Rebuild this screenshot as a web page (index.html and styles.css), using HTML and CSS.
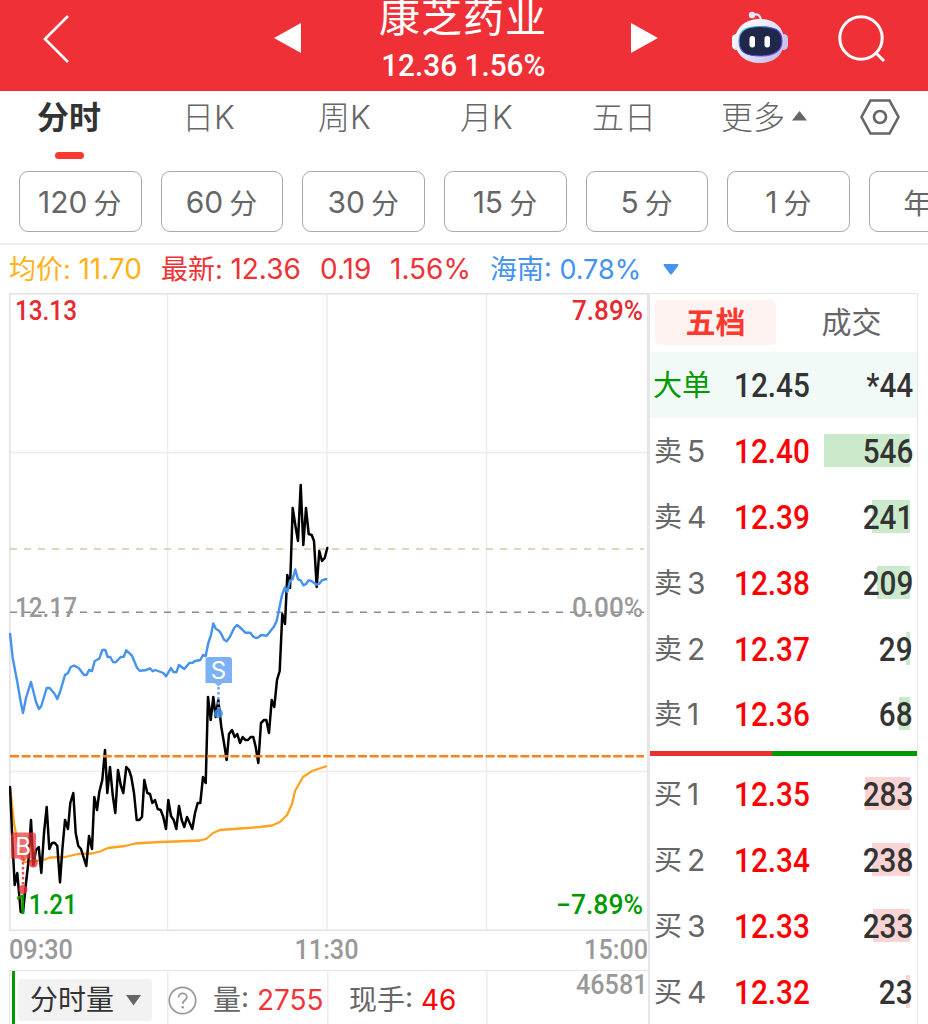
FILE: index.html
```
<!DOCTYPE html>
<html lang="zh-CN">
<head>
  <meta charset="UTF-8" />
  <meta name="viewport" content="width=device-width, initial-scale=1" />
  <title>康芝药业 - 分时</title>
  <link rel="stylesheet" href="styles.css">
</head>
<body>

  <header class="topbar">
    <svg class="back" width="30" height="50" viewBox="0 0 30 50"><path d="M27 2 4 25 27 48" fill="none" stroke="#fff" stroke-width="2.6"/></svg>
    <svg class="prev" width="27" height="30" viewBox="0 0 27 30"><path d="M0 15 27 0V30Z" fill="#fff"/></svg>
    <div class="stock">
      <h1>康芝药业</h1>
      <p><span class="din">12.36 1.56%</span></p>
    </div>
    <svg class="next" width="27" height="30" viewBox="0 0 27 30"><path d="M27 15 0 0V30Z" fill="#fff"/></svg>
    <svg class="robot" width="58" height="54" viewBox="0 0 58 54">
      <defs>
        <linearGradient id="head" x1="0" y1="0" x2="1" y2="1">
          <stop offset="0" stop-color="#fff"/>
          <stop offset=".55" stop-color="#e2e2f8"/>
          <stop offset="1" stop-color="#b5b2e2"/>
        </linearGradient>
        <linearGradient id="rim" x1="0" y1="0" x2="1" y2="1">
          <stop offset="0" stop-color="#6fe3f2"/>
          <stop offset=".5" stop-color="#4b3cc8"/>
          <stop offset="1" stop-color="#8d50f0"/>
        </linearGradient>
      </defs>
      <path d="M22 4C27 2 30 5 30 10" fill="none" stroke="#e6e4f8" stroke-width="2.2"/>
      <circle cx="21" cy="4" r="3.2" fill="#e9e7fa"/>
      <rect x="1" y="23" width="9" height="16" rx="4.5" fill="#f4f3ff"/>
      <rect x="48" y="23" width="9" height="16" rx="4.5" fill="#c9c6ee"/>
      <path d="M29 8C43 8 53 16 53 30S43 52 29 52 4 44 4 30 15 8 29 8Z" fill="url(#head)"/>
      <path d="M29 15.500C43 15.500 51 19 51 30S43 45 29 45 8 41 8 30 15 15.500 29 15.500Z" fill="#20284a" stroke="url(#rim)" stroke-width="1.200"/>
      <rect x="18.500" y="25" width="5.500" height="11.500" rx="2.700" fill="#fff"/>
      <rect x="33.500" y="25" width="5.500" height="11.500" rx="2.700" fill="#fff"/>
    </svg>
    <svg class="search" width="50" height="50" viewBox="0 0 50 50"><g fill="none" stroke="#fff" stroke-width="3"><circle cx="24" cy="24" r="21.200"/><path d="M38.500 38.500 47 47"/></g></svg>
  </header>

  <nav class="tabs">
    <a class="active">分时</a>
    <a>日K</a>
    <a>周K</a>
    <a>月K</a>
    <a>五日</a>
    <a>更多<svg width="15" height="10" viewBox="0 0 15 10"><path d="M7.500 0 15 9.500H0Z" fill="#666"/></svg></a>
    <svg class="setting" width="40" height="36" viewBox="0 0 40 36"><g fill="none" stroke="#666" stroke-width="2.600"><path d="M10.500 1.500H29.500L38.500 18 29.500 34.500H10.500L1.500 18Z"/><circle cx="20" cy="18" r="6"/></g></svg>
  </nav>

  <div class="periods">
    <button><b>120</b>分</button>
    <button><b>60</b>分</button>
    <button><b>30</b>分</button>
    <button><b>15</b>分</button>
    <button><b>5</b>分</button>
    <button><b>1</b>分</button>
    <button class="year">年K</button>
  </div>

  <div class="summary">
    <span class="avg">均价: <i>11.70</i></span>
    <span>最新: <i>12.36</i></span>
    <span><i>0.19</i></span>
    <span><i>1.56%</i></span>
    <span class="sector">海南: <i>0.78%</i></span>
    <svg width="16" height="11" viewBox="0 0 16 11"><path d="M1 0H15Q16 .5 15 2L9 10Q8 11 7 10L1 2Q0 .5 1 0Z" fill="#4592ef"/></svg>
  </div>

  <main class="main">
    <section class="left">
      <svg class="chart" width="640" height="638" viewBox="9 293 640 638">
        <!-- 网格 -->
        <g stroke="#ececec" stroke-width="1.500" fill="none">
          <path d="M167.500 293V930M327 293V930M486.500 293V930M10 452.500H648M10 771.500H648"/>
        </g>
        <rect x="9.800" y="293.800" width="638" height="636.500" fill="none" stroke="#e4e4e4" stroke-width="1.800"/>
        <path d="M10 549H644" stroke="#dfc5a0" stroke-width="1.500" stroke-dasharray="7 7"/>
        <path d="M10 612.300H644" stroke="#8c8c8c" stroke-width="1.500" stroke-dasharray="7 7"/>
        <!-- 均价线 -->
        <polyline fill="none" stroke="#ffa21f" stroke-width="2.300" stroke-linejoin="round" points="10,787 14,823 19,850 25,862 32,861 42,860.5 50,857.5 65,857 78,854 92,853.5 100,851.5 108,848 125,846 135,843.5 160,842 175,841.5 200,840.5 206,839 213,833 220,830 240,828.5 260,827 272,825.5 280,822 287,815 292,804 295,791 299,784 303,777 312,771 327,766"/>
        <!-- 价格线 -->
        <polyline fill="none" stroke="#000" stroke-width="2.500" stroke-linejoin="round" stroke-linecap="round" points="10,787 12.7,847 14.7,885 17.3,873 20.7,912 23,912 26,883 28.3,863 31,820 33.3,865 36,850 38.7,847 41.3,873 44,833 46.7,807 49.3,849 52,843 54.7,842.7 57.3,846 60,882.500 62.3,850 65,820 68,829 70.3,803 73.3,793 75.7,833 78.3,846 81,849 86.3,866 89,836 92,849 94.3,797 97,810 99.3,792 102.3,780 105,750 107.3,793 110,767 112.7,795 115.3,813 118,770 120.7,785 123.3,793 126.3,767 129,770 131.3,777 134,793 136.7,820 139.3,820 142,817 144.3,780 147.3,793 150,794 152.3,803 155,800 157.7,809 160.7,810 163.3,817 166,829 168.3,800 171,816 173.7,820 176.3,829 179,806 181.7,820 184.3,827 187,817 189.7,823 192.3,829 195,813 197.7,803 200.3,803 203,777 205.7,783 208,697 210.7,720 213.3,697 215.7,717 218.3,700 221.3,727 224,743 226.7,760 229,734 232,730 234.7,737 237.3,734 240,743 242.7,737 245.3,740 248,740 250.7,737 253.3,737 255.7,747 258.3,763 261,723 264,720 266.3,720 269,733 271.7,700 274.3,707 277,680 279.7,671 282.3,614 285,624 287.3,575 290,588 292.7,508 295.3,525 298,541 300.7,485 303.3,545 306,508 308.7,534 311.7,535 314,541 316.7,587 319.3,551 322,561 324.7,558 327.3,548"/>
        <!-- 板块线 -->
        <polyline fill="none" stroke="#4592ef" stroke-width="2.400" stroke-linejoin="round" points="10,633 12.7,658 17.3,682 20.7,702 23,713 26,698 31,682 36,702 39,709 41.3,706 46.7,688 49.7,688 54.7,694 57.3,699 60,692 65,675 68,673 70.7,667 74,665.5 78.7,668 84,675 86.7,674.7 89,670 92,671 94.7,661 99.3,658.7 102.3,650 105.3,650 107.7,657 110.3,657 113,662 115.7,662.3 120.7,657 123.7,656.7 126.3,650.3 132,655.7 137,667.7 139.7,670.7 145,670.3 150,668.3 152.7,671.3 155.3,670 163.3,673 166,676.3 171,668 173.3,672 176.3,672.3 179,665 184.3,669 189.3,663 192.7,662.7 195,661 200.3,660 203,655 205.7,656 208.3,643 211,635 213.3,623.5 216,629 219,630.7 221.3,634 224,639.7 226.7,641.3 230,636.7 234,628.3 237,625 240,627.3 245.3,632.7 250.3,632.7 253.3,636.7 256,638 258.3,637.3 261.3,635 266.7,635.7 271.3,630 274.3,626 276.7,620.7 279,610 282,595 285,587.3 287.3,592 290,580.7 292.7,579 295.3,569.5 298,579.3 300.7,580.3 303.3,585.3 306,584 308.7,580.3 311.3,581 316.7,584.7 319.3,583.7 322,580.3 324.7,579.3 327.3,579.3"/>
        <path d="M10 756.200H644" stroke="#ff8019" stroke-width="2.400" stroke-dasharray="9 2.600"/>
        <!-- 买卖点 -->
        <g fill="#e82f35">
          <path opacity=".7" d="M14 832.500H33Q36 832.500 36 835.500V858.500H27L23 862 19 858.500H11V835.500Q11 832.500 14 832.500Z"/>
          <path d="M23 862V887" stroke="#ef4a50" stroke-width="2.500" stroke-dasharray="2.500 2.500"/>
          <circle cx="33.300" cy="863" r="4.500" opacity=".8"/>
          <circle cx="23" cy="889.500" r="4.500" opacity=".8"/>
        </g>
        <g fill="#4592ef">
          <path opacity=".7" d="M208.500 657H229Q232 657 232 660V683H222.500L218.500 686.500 214.500 683H205.500V660Q205.500 657 208.500 657Z"/>
          <path d="M218.500 687V711" stroke="#6aa6f0" stroke-width="2.500" stroke-dasharray="2.500 2.500"/>
          <circle cx="218.500" cy="713.500" r="4.500" opacity=".85"/>
        </g>
        <text class="mark" x="23" y="854.500">B</text>
        <text class="mark" x="218.500" y="679">S</text>
        <!-- 坐标 -->
        <g class="scale">
          <text class="up" x="15" y="320" textLength="62" lengthAdjust="spacingAndGlyphs">13.13</text>
          <text class="up" x="572" y="320" textLength="71" lengthAdjust="spacingAndGlyphs">7.89%</text>
          <text x="15" y="617" textLength="62" lengthAdjust="spacingAndGlyphs">12.17</text>
          <text x="572" y="617" textLength="71" lengthAdjust="spacingAndGlyphs">0.00%</text>
          <text class="down" x="15" y="914" textLength="62" lengthAdjust="spacingAndGlyphs">11.21</text>
          <text class="down" x="556" y="914" textLength="87" lengthAdjust="spacingAndGlyphs">−7.89%</text>
        </g>
      </svg>
      <div class="times"><span class="din">09:30</span><span class="din">11:30</span><span class="din">15:00</span></div>
      <div class="volume">
        <div class="picker">分时量<svg width="15" height="11" viewBox="0 0 15 11"><path d="M0 0H15L7.500 10.500Z" fill="#666"/></svg></div>
        <svg class="help" width="29" height="29" viewBox="0 0 29 29"><circle cx="14.500" cy="14.500" r="13.200" fill="none" stroke="#999" stroke-width="1.700"/><path d="M10.500 11.500C10.500 6 18.800 6.300 18.800 11.200 18.800 14 14.700 14.500 14.700 17.800" fill="none" stroke="#999" stroke-width="1.800"/><circle cx="14.700" cy="21.300" r="1.300" fill="#999"/></svg>
        <span class="vol">量: <i>2755</i></span>
        <span class="now">现手: <i>46</i></span>
        <span class="max din">46581</span>
      </div>
    </section>

    <section class="book">
      <div class="book-tabs"><a class="active">五档</a><a>成交</a></div>
      <div class="row big"><span class="name">大单</span><span class="price din">12.45</span><span class="num din">*44</span></div>
      <div class="row sell"><span class="name">卖<i>5</i></span><span class="price din">12.40</span><em style="width:86px"></em><span class="num din">546</span></div>
      <div class="row sell"><span class="name">卖<i>4</i></span><span class="price din">12.39</span><em style="width:38px"></em><span class="num din">241</span></div>
      <div class="row sell"><span class="name">卖<i>3</i></span><span class="price din">12.38</span><em style="width:33px"></em><span class="num din">209</span></div>
      <div class="row sell"><span class="name">卖<i>2</i></span><span class="price din">12.37</span><em style="width:4px"></em><span class="num din">29</span></div>
      <div class="row sell"><span class="name">卖<i>1</i></span><span class="price din">12.36</span><em style="width:11px"></em><span class="num din">68</span></div>
      <div class="ratio"><div style="width:122px"></div></div>
      <div class="row buy"><span class="name">买<i>1</i></span><span class="price din">12.35</span><em style="width:45px"></em><span class="num din">283</span></div>
      <div class="row buy"><span class="name">买<i>2</i></span><span class="price din">12.34</span><em style="width:38px"></em><span class="num din">238</span></div>
      <div class="row buy"><span class="name">买<i>3</i></span><span class="price din">12.33</span><em style="width:37px"></em><span class="num din">233</span></div>
      <div class="row buy"><span class="name">买<i>4</i></span><span class="price din">12.32</span><em style="width:4px"></em><span class="num din">23</span></div>
    </section>
  </main>

</body>
</html>
```
FILE: styles.css
```
* {
  box-sizing: border-box;
}
body {
  margin: 0;
  height: 1024px;
  overflow: hidden;
  background: #fff;
  color: #666;
  font-family: Inter, 'Noto Sans CJK SC', sans-serif;
}
h1, p {
  margin: 0;
}
i, em {
  font-style: normal;
}
svg {
  display: block;
  flex: none;
}
.din {
  display: inline-block;
  font-family: Roboto, sans-serif;
  font-weight: 500;
  transform: scaleX(0.9);
  white-space: pre;
}

/* 顶部 */
.topbar {
  display: flex;
  height: 91px;
  background: #f03037;
  color: #fff;
}
.back {
  margin: 14px 0 0 41px;
}
.prev {
  margin: 23px 0 0 203px;
}
.stock {
  width: 330px;
  padding-right: 6px;
  text-align: center;
}
.stock h1 {
  height: 44px;
  font-size: 41px;
  line-height: 34px;
  font-weight: 400;
  letter-spacing: 1px;
}
.stock p {
  font-size: 32px;
  line-height: 42px;
}
.stock .din {
  transform: scaleX(0.93);
}
.next {
  margin-top: 23px;
}
.robot {
  margin: 11px 0 0 73px;
}
.search {
  margin: 14px 0 0 48px;
}

/* 周期 */
.tabs {
  display: grid;
  grid-template-columns: 145px 136px 142px 132px 129px 139px 40px;
  height: 80px;
  padding-left: 37px;
  font-size: 32px;
  line-height: 54px;
  font-weight: 300;
}
.tabs a {
  display: flex;
}
.tabs a svg {
  margin: 20px 0 0 7px;
}
.tabs .active {
  flex-direction: column;
  color: #333;
  font-weight: 700;
}
.tabs .active::after {
  content: '';
  width: 29px;
  height: 7px;
  margin: 7px 0 0 18px;
  border-radius: 4px;
  background: #fb3a2f;
}
.setting {
  margin-top: 8px;
}
.periods {
  display: flex;
  gap: 19px;
  height: 74px;
  padding-left: 19px;
  overflow: hidden;
  border-bottom: 2px solid #eee;
}
.periods button {
  display: flex;
  flex: none;
  align-items: center;
  justify-content: center;
  gap: 6px;
  width: 122.7px;
  height: 61px;
  padding: 0 1px 0 0;
  border: 1.5px solid #aaa;
  border-radius: 9px;
  background: #fff;
  color: #666;
  font-family: inherit;
  font-size: 28px;
}
.periods b {
  font-size: 30px;
  font-weight: 400;
}
.periods .year {
  padding-right: 7px;
}

/* 行情摘要 */
.summary {
  display: grid;
  grid-template-columns: 152px 159px 70px 100px 173px 16px;
  height: 48px;
  padding-left: 9px;
  align-items: center;
  color: #ee3236;
  font-size: 27px;
  line-height: 48px;
  white-space: nowrap;
}
.summary i {
  font-size: 28px;
}
.summary .avg {
  color: #fdb218;
}
.summary .sector {
  color: #4592ef;
}
.summary .sector i {
  font-size: 27px;
}

/* 走势图 */
.main {
  display: flex;
  padding-left: 9px;
}
.left {
  width: 640px;
}
.mark {
  fill: #fff;
  font: 24px Inter, sans-serif;
  text-anchor: middle;
}
.scale {
  fill: #999;
  font: 500 27px Roboto, sans-serif;
}
.scale .up {
  fill: #e8292e;
}
.scale .down {
  fill: #090;
}
.times {
  display: flex;
  justify-content: space-between;
  height: 39px;
  color: #999;
  font-size: 28px;
  line-height: 38px;
}
.times span:first-child {
  transform-origin: left;
}
.times span:nth-child(2) {
  margin-right: 3px;
}
.times span:last-child {
  margin-right: 1px;
  transform-origin: right;
}
.volume {
  display: flex;
  height: 60px;
  border: 1.5px solid #e6e6e6;
  background: linear-gradient(#ececec, #ececec) 157px 0 / 1.5px 100% no-repeat,
    linear-gradient(#ececec, #ececec) 317px 0 / 1.5px 100% no-repeat,
    linear-gradient(#ececec, #ececec) 476px 0 / 1.5px 100% no-repeat;
  font-size: 28px;
  line-height: 58px;
  white-space: nowrap;
}
.volume::before {
  content: '';
  width: 3px;
  margin-left: 2px;
  background: #090;
}
.picker {
  display: flex;
  align-items: center;
  width: 134px;
  height: 42px;
  margin: 8px 0 0 3px;
  padding-left: 12px;
  border-radius: 4px;
  background: #f2f2f2;
  color: #333;
}
.picker svg {
  margin-left: 12px;
}
.help {
  margin: 15px 0 0 16px;
}
.vol {
  width: 136px;
  margin-left: 16px;
}
.vol i {
  color: #f0353a;
}
.now i {
  color: #f00;
}
.max {
  margin-left: auto;
  color: #999;
  line-height: 27px;
  transform-origin: right;
}

/* 五档 */
.book {
  width: 270px;
  height: 731px;
  margin-left: -1px;
  border: solid #e6e6e6;
  border-width: 1px 1.5px 0 2px;
}
.book-tabs {
  display: flex;
  height: 58px;
  padding: 6px 0 0 5px;
  font-size: 30px;
  line-height: 45px;
  text-align: center;
}
.book-tabs a {
  width: 121px;
  height: 45px;
  border-radius: 5px;
}
.book-tabs a:last-child {
  margin-left: 15px;
}
.book-tabs .active {
  background: #fff3f2;
  color: #fb3a2f;
  font-weight: 700;
}
.row {
  position: relative;
  display: flex;
  height: 65.9px;
  padding-left: 4px;
  line-height: 67px;
}
.name {
  display: flex;
  gap: 5px;
  width: 80px;
  font-size: 28px;
}
.name i {
  font-size: 30px;
}
.price, .num {
  position: relative;
  font-size: 33px;
}
.price {
  color: #f00;
  transform-origin: left;
}
.num {
  margin: 0 4px 0 auto;
  color: #333;
  transform-origin: right;
}
.row em {
  position: absolute;
  top: 16px;
  right: 7px;
  height: 33px;
}
.sell em {
  background: #cbeacb;
}
.buy em {
  background: #fad3d4;
}
.big {
  background: #f2faf7;
}
.big .name {
  margin-left: -1px;
  width: 81px;
  color: #090;
  font-size: 29px;
}
.big .price {
  color: #333;
}
.ratio {
  height: 14px;
  padding-top: 4px;
}
.ratio::before {
  content: '';
  display: block;
  height: 5px;
  background: #090;
}
.ratio div {
  height: 5px;
  margin-top: -5px;
  background: #e63232;
}
```
